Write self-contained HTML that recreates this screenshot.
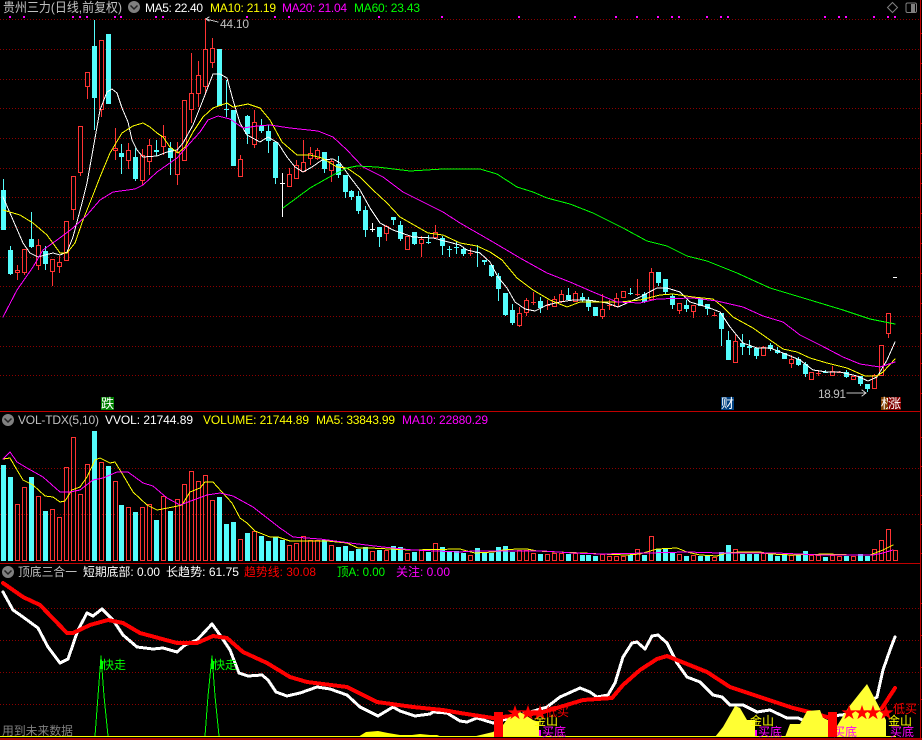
<!DOCTYPE html>
<html><head><meta charset="utf-8"><style>
html,body{margin:0;padding:0;background:#000;width:922px;height:740px;overflow:hidden}
svg{display:block;position:absolute;left:0;top:0}
text{font-family:"Liberation Sans","WenQuanYi Zen Hei","Noto Sans CJK SC",sans-serif;font-size:12px}
</style></head><body>
<svg id="s" xmlns="http://www.w3.org/2000/svg" width="922" height="740" viewBox="0 0 922 740">
<rect width="922" height="740" fill="#000"/>
<g id="chart"></g>
<g id="labels">
<text x="3" y="12" fill="#c0c0c0" textLength="119" lengthAdjust="spacingAndGlyphs" style="font-size:13px">贵州三力(日线,前复权)</text>
<text x="145" y="12" fill="#fff" textLength="58">MA5: 22.40</text>
<text x="210" y="12" fill="#ff0" textLength="66">MA10: 21.19</text>
<text x="282" y="12" fill="#f0f" textLength="65">MA20: 21.04</text>
<text x="354" y="12" fill="#0f0" textLength="66">MA60: 23.43</text>
<text x="220" y="28" fill="#c0c0c0" textLength="29">44.10</text>
<text x="818" y="398" fill="#c0c0c0" textLength="28">18.91</text>
<rect x="101" y="397" width="13" height="13" fill="#008000"/>
<text x="101" y="408" fill="#fff" style="font-size:13px">跌</text>
<rect x="721" y="397" width="13" height="13" fill="#004080"/>
<text x="721" y="408" fill="#fff" style="font-size:13px">财</text>
<rect x="881" y="397" width="13" height="13" fill="#804000"/>
<text x="881" y="408" fill="#fff" style="font-size:13px">权</text>
<rect x="888" y="397" width="13" height="13" fill="#800000"/>
<text x="888" y="408" fill="#fff" style="font-size:13px">涨</text>
<text x="18" y="424" fill="#c0c0c0" textLength="81">VOL-TDX(5,10)</text>
<text x="105" y="424" fill="#fff" textLength="88">VVOL: 21744.89</text>
<text x="203" y="424" fill="#ff0" textLength="106">VOLUME: 21744.89</text>
<text x="316" y="424" fill="#ff0" textLength="79">MA5: 33843.99</text>
<text x="402" y="424" fill="#f0f" textLength="86">MA10: 22880.29</text>
<text x="18" y="576" fill="#c0c0c0" textLength="59" lengthAdjust="spacingAndGlyphs">顶底三合一</text>
<text x="83" y="576" fill="#fff" textLength="77" lengthAdjust="spacingAndGlyphs">短期底部: 0.00</text>
<text x="166" y="576" fill="#fff" textLength="73" lengthAdjust="spacingAndGlyphs">长趋势: 61.75</text>
<text x="244" y="576" fill="#f00" textLength="72" lengthAdjust="spacingAndGlyphs">趋势线: 30.08</text>
<text x="337" y="576" fill="#0f0" textLength="48" lengthAdjust="spacingAndGlyphs">顶A: 0.00</text>
<text x="396" y="576" fill="#f0f" textLength="54" lengthAdjust="spacingAndGlyphs">关注: 0.00</text>
<text x="2" y="735" fill="#808080" textLength="71" lengthAdjust="spacingAndGlyphs">用到未来数据</text>
<text x="102" y="669" fill="#0f0">快走</text>
<text x="213" y="669" fill="#0f0">快走</text>
<text x="545" y="716" fill="#f00">低买</text>
<text x="893" y="713" fill="#f00">低买</text>
<g fill="#ff0">
<text x="534" y="725">金山</text><text x="750" y="725">金山</text><text x="888" y="725">金山</text>
</g>
<g fill="#f0f">
<text x="542" y="736">买底</text><text x="758" y="736">买底</text><text x="833" y="736">买底</text><text x="890" y="736">买底</text>
</g>
</g>
<g id="over"></g>
<g fill="#f00" text-anchor="middle" style="font-size:16px">
<text x="515" y="718" style="font-size:16px">★</text><text x="528" y="718" style="font-size:16px">★</text><text x="540" y="718" style="font-size:16px">★</text>
<text x="849" y="718" style="font-size:16px">★</text><text x="862" y="718" style="font-size:16px">★</text><text x="873" y="718" style="font-size:16px">★</text><text x="886" y="718" style="font-size:16px">★</text>
</g>
<g id="icons">
<circle cx="134" cy="7" r="6" fill="#808080"/><path d="M130.5 5.5l3.5 3.5l3.5-3.5" fill="none" stroke="#222" stroke-width="1.5"/>
<circle cx="8" cy="420" r="6" fill="#808080"/><path d="M4.5 418.5l3.5 3.5l3.5-3.5" fill="none" stroke="#222" stroke-width="1.5"/>
<circle cx="8" cy="572" r="6" fill="#808080"/><path d="M4.5 570.5l3.5 3.5l3.5-3.5" fill="none" stroke="#222" stroke-width="1.5"/>
<path d="M892.5 2.5l5 5l-5 5l-5-5z" fill="none" stroke="#808080"/>
<rect x="906" y="3" width="10.5" height="9.5" rx="1.5" fill="none" stroke="#808080"/>
<rect x="911" y="4" width="4" height="8" fill="#808080"/>
</g>
</svg>
<script>
var D=[
"c,179,190,230,230","c,246,250,274,275","r,265,270,272,280","r,249,249,272,275","c,212,239,247,248","r,239,245,265,270","c,246,251,264,270","r,259,259,271,286","r,256,262,266,273","r,221,221,260,260",
"r,176,176,209,220","r,126,126,172,176","r,72,72,86,99","c,20,46,98,130","r,40,40,109,117","c,34,34,104,104","r,128,148,150,160","c,144,153,157,174","r,143,150,160,169","c,148,157,179,181",
"r,149,155,180,185","r,139,145,161,175","c,140,150,152,156","r,125,136,146,155","c,142,148,158,175","r,142,152,174,185","r,100,100,160,160","r,53,93,109,123","r,61,75,93,107","r,18,49,86,95",
"r,38,48,62,68","c,49,49,106,106","c,80,109,109,117","c,110,110,166,166","r,155,159,176,176","c,115,116,134,144","r,110,122,144,148","c,119,126,131,133","c,125,131,141,153","c,142,142,178,184",
"w,173,183,183,217","r,168,174,186,186","r,160,165,178,178","r,140,162,171,172","r,147,153,158,165","r,148,150,158,160","c,152,152,169,173","r,159,161,170,182","c,156,164,175,178","c,175,175,192,198",
"c,190,191,197,200","c,191,196,211,214","c,206,210,230,237","w,223,229,229,232","c,227,227,237,247","r,225,226,233,241","c,217,217,220,225","c,221,225,239,241","r,236,236,249,249","c,232,232,244,245",
"r,236,239,243,257","c,235,242,242,244","r,225,232,237,238","c,236,238,246,255","c,246,249,249,257","c,242,247,247,254","c,247,249,254,256","r,248,253,253,256","c,245,252,252,267","c,260,260,262,265",
"c,265,265,276,277","c,273,276,289,301","c,293,293,315,316","c,304,310,323,325","r,307,313,325,327","r,298,300,312,316","r,292,302,302,305","c,297,301,308,313","r,300,305,305,310","r,296,299,306,307",
"r,290,294,301,303","c,288,295,300,301","r,291,293,301,302","c,293,297,300,302","c,297,300,307,311","c,307,307,316,316","r,294,309,316,319","r,300,305,305,310","r,293,298,306,307","r,291,291,297,297",
"c,288,293,293,295","r,279,294,294,296","c,292,294,302,303","r,268,272,299,300","c,272,272,283,286","c,279,279,292,295","c,294,296,305,309","r,303,303,310,314","c,300,305,309,312","r,305,305,311,318",
"c,298,298,306,306","c,304,304,309,315","r,312,315,315,316","c,313,313,329,346","c,331,340,360,360","r,335,341,362,362","c,334,343,347,355","c,340,346,348,355","c,348,348,356,359","r,346,347,355,355",
"c,343,345,349,351","c,347,350,353,354","c,353,353,359,359","r,355,359,363,368","c,357,359,365,366","c,362,364,374,377","r,372,372,379,379","r,370,373,373,376","c,370,372,372,373","r,366,371,375,375",
"r,371,372,372,373","c,370,372,377,378","r,376,376,379,379","c,376,376,384,386","c,384,384,389,392","r,374,375,388,389","r,345,345,375,375","r,313,313,333,338","w,277,277,277,277"];
var V=[
"c465","c477","r504","r487","c477","r496","c511","r509","r517","r467","r437","r494","r464","c431","r462","c466","r481","c505","r507","c512",
"r507","r504","c520","r496","c511","r499","r484","r471","r481","r475","r500","c497","c524","c522","r539","c533","r531","c536","c541","c537",
"c540","r545","r543","r536","r540","r540","c540","r545","c547","c546","c551","c549","c547","r551","c550","r550","c546","c547","r553","c552",
"r550","c552","r543","c547","c551","c551","c553","r555","c548","c553","c553","c547","c546","c552","r550","r550","r553","c554","r554","r553",
"r553","c554","r553","c555","c555","c556","r554","r556","r556","r556","c555","r549","c555","r536","c549","c549","c552","r554","c556","r555",
"c556","c556","r557","c552","c545","r549","c554","c554","c554","r553","c554","c556","c555","r555","c555","c551","r555","r555","c557","r555",
"r556","c556","r556","c554","c556","r549","r540","r529","r550"];
function X(i){return i<=16?3+7*i:i<=49?2+7*i:i<=83?1+7*i:i<=115?7*i:7*i-1}
var CY="#54fcfc",RD="#ff3333",o=[];
function grid(y){o.push('<line x1="0" x2="920" y1="'+(y+.5)+'" y2="'+(y+.5)+'" stroke="#8c0000" stroke-dasharray="1 2"/>')}
[19,49,79,108,138,168,197,227,257,286,316,346,375,468,514,608,640,672,704].forEach(grid);
var mg=[10,24,73,80,87,115,121,156,163,247,275,289,379,442,519,575,616,637,658,672,679,707,721,728,825,839,846,874,888,895],m="";
mg.forEach(function(x){m+='M'+(x-1)+' 16h2v2h-2z'});
o.push('<path d="'+m+'" fill="#f0f" shape-rendering="crispEdges"/>');
function R(x,y,w,h,f){o.push('<rect x="'+x+'" y="'+y+'" width="'+w+'" height="'+h+'" fill="'+f+'"/>')}
o.push('<g shape-rendering="crispEdges">');
D.forEach(function(s,i){
 var p=s.split(','),t=p[0],a=+p[1],b=+p[2],d=+p[3],e=+p[4],c=X(i);
 var col=t=='c'?CY:t=='w'?'#fff':RD;
 if(i==128){R(893,277,4,1,'#fff');return}
 if(a<e)R(c,a,1,e-a,col);
 if(d-b<=1){R(c-2,b,5,1,col);}
 else if(t=='c'){R(c-2,b,5,d-b,col);}
 else{R(c-2,b,5,1,col);R(c-2,d,5,1,col);R(c-2,b,1,d-b,col);R(c+2,b,1,d-b+1,col);
 o.push('<rect x="'+(c-1)+'" y="'+(b+1)+'" width="3" height="'+(d-b-1)+'" fill="#000"/>');}
});
V.forEach(function(s,i){
 var t=s[0],y=+s.slice(1),c=X(i),h=561-y;
 if(t=='c'){R(c-2,y,5,h,CY)}
 else{R(c-2,y,5,1,RD);R(c-2,560,5,1,RD);R(c-2,y,1,h,RD);R(c+2,y,1,h,RD)}
});
o.push('</g>');
function L(pts,col,w,ce){o.push('<polyline points="'+pts+'" fill="none" stroke="'+col+'" stroke-width="'+w+'" stroke-linejoin="round" stroke-linecap="round"'+(ce?' shape-rendering="crispEdges"':'')+'/>')}
L("3,197 13,220 23,243 30,253 38,257 45,255 53,253 60,255 67,252 73,237 82,203 87,183 97,127 100,110 107,92 112,89 117,93 122,108 128,122 132,140 137,150 143,157 157,156 167,152 177,150 183,143 193,125 203,100 213,74 220,74 227,78 233,100 240,123 247,135 260,142 268,137 278,143 287,157 295,167 303,172 312,167 322,160 333,159 340,163 350,177 360,190 370,208 380,223 393,230 413,237 433,238 460,245 467,250 480,253 490,262 498,277 507,288 515,302 525,309 535,311 547,305 560,302 573,300 588,300 607,303 618,307 627,303 640,297 657,288 667,288 680,292 690,302 707,307 720,312 730,327 743,343 757,348 770,348 783,353 800,360 813,370 827,372 840,372 857,376 868,381 877,377 887,360 895,342","#fff",1,1);
L("3,210 20,215 33,223 47,235 60,253 67,253 75,243 83,220 95,190 100,177 110,153 122,133 133,126 143,123 150,127 157,133 163,137 170,147 178,153 185,147 193,132 203,117 213,108 227,103 233,107 248,104 260,108 270,120 282,142 297,155 310,155 322,158 337,167 347,168 360,177 373,190 387,203 400,217 428,233 443,235 460,243 477,246 490,252 502,260 517,278 533,290 550,300 567,307 580,302 600,302 620,302 640,300 660,295 673,294 693,297 713,299 723,307 733,317 753,328 770,340 783,349 797,352 810,358 827,363 847,368 865,376 877,376 883,372 895,359","#ff0",1,1);
L("3,317 17,290 33,267 43,250 57,240 73,228 87,215 100,200 113,192 135,189 143,185 157,172 177,158 190,143 200,132 208,120 218,116 230,119 243,128 257,126 270,125 290,128 318,131 333,137 347,150 363,167 383,177 403,192 423,202 443,212 460,223 493,242 520,258 547,273 570,282 593,292 617,302 640,303 657,299 693,298 717,301 743,307 763,316 783,322 800,335 820,345 843,357 860,364 880,367 895,362","#f0f",1,1);
L("283,208 310,188 333,175 347,168 357,166 377,167 410,171 443,169 480,169 497,174 517,187 533,192 547,198 570,204 593,213 623,228 647,241 667,246 687,256 707,261 737,273 770,288 810,300 843,310 870,319 895,324","#0f0",1,1);
L("3,459 10,458 17,470 23,480 33,485 45,496 53,497 60,502 65,501 72,490 80,487 87,477 95,460 100,458 110,463 115,462 123,475 133,492 147,505 157,510 173,507 182,505 190,492 200,488 205,482 213,482 222,492 232,503 240,518 247,523 255,531 270,537 278,537 290,541 310,541 327,541 347,543 358,548 370,548 390,549 410,550 460,549 467,551 475,553 493,552 503,550 517,549 527,549 537,551 557,552 583,553 600,554 627,555 640,554 650,551 657,549 677,548 687,552 700,555 717,556 727,553 740,552 760,552 770,554 793,555 827,554 853,555 870,555 883,550 893,545","#ff0",1,1);
L("3,459 10,452 17,462 27,468 43,477 60,492 70,492 80,490 93,480 103,478 117,472 128,472 143,483 153,486 167,498 180,505 207,495 220,493 233,496 253,507 280,528 293,537 320,539 350,543 383,547 413,550 460,552 473,551 510,551 543,551 573,553 600,554 647,553 687,552 720,553 777,553 820,555 873,555 883,553 893,550","#f0f",1,1);
L("95,736 98,696 101,656 104,696 108,736","#0f0",1,1);
L("205,736 208,696 212,656 215,696 219,736","#0f0",1,1);
R(100,661,3,8,'#0f0');R(211,661,3,8,'#0f0');
L("3,592 13,610 23,617 38,628 48,647 60,663 68,659 78,630 87,613 93,616 102,609 113,620 123,635 137,647 153,649 163,648 177,652 185,645 197,640 212,624 220,635 230,650 239,673 248,676 262,675 268,680 276,692 287,696 300,693 317,687 330,689 347,695 360,707 378,716 393,707 400,711 415,716 430,714 433,712 447,713 460,721 467,722 477,718 493,723 503,720 527,713 547,707 560,697 580,688 590,692 597,697 608,695 615,683 623,657 632,643 637,642 645,649 652,636 658,635 667,643 677,663 687,677 700,682 713,695 722,697 730,705 743,705 757,712 770,710 787,718 798,718 810,723 823,717 850,714 877,697 883,670 890,650 895,637","#fff",3,1);
L("3,583 23,597 40,605 67,633 73,633 90,625 108,620 123,623 140,633 177,643 197,643 213,636 227,638 243,652 267,663 290,677 307,682 347,687 377,702 413,707 443,710 460,713 493,718 540,713 560,707 583,700 612,698 623,685 640,670 657,659 667,656 707,672 730,687 760,697 793,708 813,713 827,717","#f00",4,1);
L("882,708 895,688","#f00",4,1);
o.push('<polygon fill="#ff0" points="358,737 366,732 378,731 388,733 400,735 412,735 420,734 430,735 437,735 442,737"/>');
o.push('<polygon fill="#ff3" points="472,737 493,732 503,725 508,718 520,712 530,718 533,720 539,722 539,737"/>');
o.push('<polygon fill="#ff3" points="715,737 723,727 735,706 740,708 747,720 755,720 755,737"/>');
o.push('<polygon fill="#ff3" points="785,737 790,724 800,724 807,711 820,710 823,718 828,720 828,737"/>');
o.push('<polygon fill="#ff3" points="837,737 837,726 848,708 867,684 877,703 886,720 886,737"/>');
R(539,730,2,7,'#f0f');R(755,730,2,7,'#f0f');
R(0,736,896,1,'#ff0');
R(0,411,920,1,'#c00000');R(0,563,920,1,'#c00000');R(0,738,922,2,'#a80000');R(920,0,1,740,'#c00000');
[33,63,93,123,153,183,213,243,273,303,333,363,393,437,466,495,524,553,603,635,667,699].forEach(function(y){R(921,y,1,1,'#c00000')});
L("206,19 218,22","#c0c0c0",1,1);L("206,19 209,17","#c0c0c0",1,1);L("206,19 209,21","#c0c0c0",1,1);
L("847,393 866,393","#c0c0c0",1,1);L("866,393 862,390","#c0c0c0",1,1);L("866,393 862,396","#c0c0c0",1,1);
document.getElementById('chart').innerHTML=o.join('');
document.getElementById('over').innerHTML='<rect x="494" y="712" width="9" height="25" fill="#f00"/><rect x="828" y="712" width="9" height="25" fill="#f00"/>';
</script>
</body></html>
